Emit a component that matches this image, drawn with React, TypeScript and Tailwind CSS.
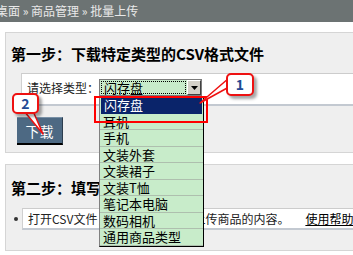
import React from "react";

const options = [
  "闪存盘",
  "耳机",
  "手机",
  "文装外套",
  "文装裙子",
  "文装T恤",
  "笔记本电脑",
  "数码相机",
  "通用商品类型",
];

const Callout = ({ label, className }: { label: string; className: string }) => (
  <div
    className={`absolute flex items-center justify-center rounded-[5px] border-2 border-[#ee1111] bg-white text-[14px] font-bold text-[#234a94] shadow-[3px_3px_3px_rgba(0,0,0,0.35)] ${className}`}
  >
    {label}
  </div>
);

export default function App() {
  return (
    <div className="relative h-[255px] w-[353px] overflow-hidden bg-white font-['Noto_Sans_CJK_SC','Liberation_Sans',sans-serif] text-black">
      {/* breadcrumb bar */}
      <div className="h-[22px] whitespace-nowrap bg-[#6c7373] text-[12px] leading-[22px] text-[#e9e9e9]">
        <span className="-ml-1">桌面 » 商品管理 » 批量上传</span>
      </div>

      {/* step 1 */}
      <div className="ml-[5px] mr-[-20px] mt-[10px] h-[121px] border border-[#d5d5d5] bg-[#efefef] pt-[12px]">
        <div className="h-[18px] whitespace-nowrap pl-[5px] text-[15px] font-bold leading-[18px]">
          第一步：下载特定类型的CSV格式文件
        </div>
        <div className="ml-[15px] mt-[10px] flex h-[33px] items-start border-b-2 border-l border-t border-b-[#c3c9d1] border-l-[#d0d0d0] border-t-[#cccccc] bg-white pl-[5px] pt-[5px]">
          <span className="h-[17px] text-[12px] leading-[17px] text-[#222]">请选择类型：</span>
          <div className="flex h-[17px] w-[103px] border border-[#7b7b7b] bg-[#c8ecca]">
            <div className="m-[1px] flex flex-1 items-center border border-dotted border-black bg-[#c8ecca] pl-[2px] text-[13px] leading-none">
              闪存盘
            </div>
            <div className="flex w-[14px] items-center justify-center border border-b-[#404040] border-l-white border-r-[#404040] border-t-white bg-[#d4d0c8]">
              <svg width="7" height="4" viewBox="0 0 7 4">
                <path d="M0 0h7L3.5 4z" fill="#000" />
              </svg>
            </div>
          </div>
        </div>
        <button className="ml-[11px] mt-[11px] h-[28px] w-[46px] border-b-2 border-r border-t border-b-black border-r-[#2c3d4e] border-t-[#7890a6] bg-[#4d6983] text-[14px] leading-[26px] text-white">
          下载
        </button>
      </div>

      {/* step 2 */}
      <div className="ml-[5px] mr-[-20px] mt-[11px] h-[87px] border border-[#d5d5d5] bg-[#efefef] pt-[14px]">
        <div className="h-[18px] whitespace-nowrap pl-[5px] text-[15px] font-bold leading-[18px]">
          第二步：填写CSV文件
        </div>
        <div className="mt-[11px] flex items-center">
          <span className="ml-[8px] mr-[4px] h-[4px] w-[4px] rounded-full bg-[#333]" />
          <div className="flex h-[22px] flex-1 items-center whitespace-nowrap border-b-2 border-l border-t border-b-[#c3c9d1] border-l-[#d0d0d0] border-t-[#cccccc] bg-white pl-[5px] text-[12px] text-[#222]">
            <span>打开CSV文件，在文件中填写要上传商品的内容。</span>
            <a className="ml-[16px] text-black underline">使用帮助</a>
          </div>
        </div>
      </div>

      {/* open dropdown list */}
      <ul className="absolute left-[99px] top-[96px] h-[151px] w-[105px] border-b border-l border-r border-b-black border-l-[#808080] border-r-black bg-[#c8ecca] pt-[1px] text-[13px]">
        {options.map((o, i) => (
          <li
            key={o}
            className={`h-[16.5px] whitespace-nowrap border-b border-[#aebfae] pl-[3px] leading-[15.5px] ${
              i === 0 ? "mx-[1px] border-transparent bg-[#0a246a] pl-[2px] text-white" : "text-black"
            }`}
          >
            {o}
          </li>
        ))}
      </ul>

      {/* red highlight */}
      <div className="absolute left-[94px] top-[96px] h-[27px] w-[114px] border-2 border-[#ff0000]" />

      {/* callout tails */}
      <svg className="pointer-events-none absolute left-0 top-0" width="353" height="255">
        <polygon points="229,78 229,87 200,103" fill="#fff" stroke="#ee1111" strokeWidth="1.5" strokeLinejoin="round" />
        <polygon points="24,111 33,111 43,134" fill="#fff" stroke="#ee1111" strokeWidth="1.5" strokeLinejoin="round" />
      </svg>

      <Callout label="1" className="left-[226px] top-[73px] h-[23px] w-[28px]" />
      <Callout label="2" className="left-[12px] top-[93px] h-[21px] w-[27px]" />
    </div>
  );
}
